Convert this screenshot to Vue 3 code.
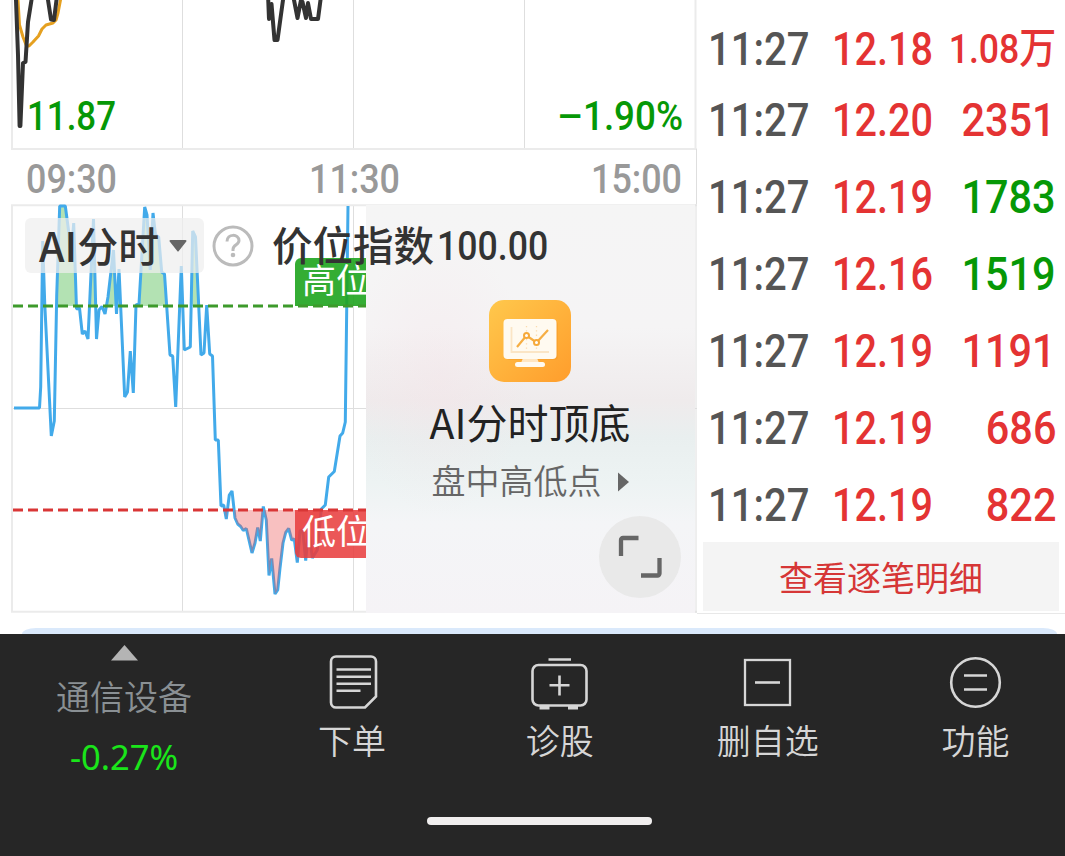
<template>
    <div class="page">
        <div class="content">
            <div class="charts">
                <svg class="priceChart" width="697" height="204" viewBox="0 0 697 204">
                    <g class="grid">
                        <path d="M182.5 0V149 M353.5 0V149 M524.5 0V149" />
                        <path class="frame" d="M12 0V149 M11 149H697 M695.5 0V149" />
                        <path d="M696.5 149V204" />
                    </g>
                    <path class="average" d="M18 0L19.5 25L23 37L26.5 46L29 46L33 42L38.5 36L42 29L46 25L53 23L56 20L58 13L60.5 0" />
                    <path class="price" d="M16 0L18 55L19.6 126L20.4 126L23 63L25.5 62L28 22L31.5 0" />
                    <path class="price" d="M48 0L51 19.5L54 20L56.5 0" />
                    <path class="price" d="M268 -6L269 19L271.5 4L274.5 40L277.5 40L283 0" />
                    <path class="price" d="M294 0L297.5 18L301 0L302.5 2L306 18L308 3L311 19L318 19L320.5 0" />
                    <text class="low" x="27" y="130" textLength="89" lengthAdjust="spacingAndGlyphs">11.87</text>
                    <text class="low" x="557" y="129.5" textLength="22">–</text>
                    <text class="low" x="583" y="130" textLength="100" lengthAdjust="spacingAndGlyphs">1.90%</text>
                    <text
                        v-for="tick in ticks"
                        :key="tick.label"
                        class="tick"
                        :x="tick.x"
                        y="193"
                        textLength="91"
                        lengthAdjust="spacingAndGlyphs"
                    >{{ tick.label }}</text>
                </svg>

                <div class="indexChart">
                    <svg class="plot" width="697" height="410" viewBox="0 204 697 410">
                        <defs>
                            <clipPath id="above"><rect x="0" y="205" width="366" height="101" /></clipPath>
                            <clipPath id="below"><rect x="0" y="510" width="366" height="104" /></clipPath>
                            <clipPath id="visible"><rect x="0" y="204" width="366" height="410" /></clipPath>
                        </defs>
                        <g class="grid">
                            <path d="M182.5 205V612 M353.5 205V612 M12 408.5H697" />
                            <path class="frame" d="M12 205V612 M11 205.2H697 M11 611.8H697" />
                            <path d="M696 204V613" />
                        </g>
                        <path class="highFill" :d="areaPath(HIGH_Y)" clip-path="url(#above)" />
                        <path class="index" :d="linePath" />
                        <path class="lowFill" :d="areaPath(LOW_Y)" clip-path="url(#below)" />
                        <g clip-path="url(#visible)">
                            <path class="highTag" d="M295 306V264a6 6 0 0 1 6-6h72v48z" />
                            <path class="lowTag" d="M295 510v42a6 6 0 0 0 6 6h72v-48z" />
                            <path class="highLine" d="M13 306H366" />
                            <path class="lowLine" d="M13 510H366" />
                            <text class="tag" x="302" y="292.5">高位</text>
                            <text class="tag" x="302" y="544">低位</text>
                        </g>
                    </svg>

                    <div class="promo">
                        <svg class="promoIcon" width="82" height="82" viewBox="0 0 82 82">
                            <defs>
                                <linearGradient id="orange" x1="0" y1="0" x2="1" y2="1">
                                    <stop offset="0" stop-color="#ffc84c" />
                                    <stop offset="1" stop-color="#ff9d2c" />
                                </linearGradient>
                            </defs>
                            <rect width="82" height="82" rx="15" fill="url(#orange)" />
                            <rect x="17" y="21" width="52" height="39" rx="4" fill="#f39a25" opacity=".45" />
                            <path d="M34 58h14l2 5H32z" fill="#ffe6c2" />
                            <rect x="14.500" y="19" width="53" height="40" rx="4" fill="#fffaf0" />
                            <rect x="26" y="62" width="30" height="5" rx="2.500" fill="#fffaf0" />
                            <path d="M22.500 27V52H60" fill="none" stroke="#fbe5c5" stroke-width="1.800" />
                            <path d="M37.500 26V50M47.500 26V50" fill="none" stroke="#fbdcae" stroke-width="1.300" stroke-dasharray="1.300 3" />
                            <path d="M28 47L37.500 35.500L47.500 42.500L59 30" fill="none" stroke="#f6ae43" stroke-width="2.200" />
                            <circle cx="37.500" cy="35.500" r="2.500" fill="#fff" stroke="#f6a93a" stroke-width="2" />
                            <circle cx="47.500" cy="42.500" r="2.500" fill="#fff" stroke="#f6a93a" stroke-width="2" />
                        </svg>
                        <div class="promoTitle">AI分时顶底</div>
                        <div class="promoLink">
                            <span>盘中高低点</span>
                            <svg width="12" height="20" viewBox="0 0 12 20"><path d="M1 .5L12 10L1 19.500z" fill="#666" /></svg>
                        </div>
                    </div>

                    <button class="expand">
                        <svg width="82" height="82" viewBox="0 0 82 82">
                            <path d="M22 40V24a2 2 0 0 1 2-2H39.500M60.500 42V57.500a2 2 0 0 1-2 2H42" fill="none" stroke="#666" stroke-width="4.300" />
                        </svg>
                    </button>

                    <div class="toolbar">
                        <div class="picker">
                            <span>AI分时</span>
                            <svg width="18" height="12" viewBox="0 0 18 12"><path d="M1.500 0h15a1 1 0 0 1 .8 1.600L9.800 11a1 1 0 0 1-1.600 0L.7 1.600A1 1 0 0 1 1.500 0z" fill="#666" /></svg>
                        </div>
                        <svg class="help" width="42" height="42" viewBox="0 0 42 42" fill="none" stroke="#bbb">
                            <circle cx="21" cy="21" r="19" stroke-width="3" />
                            <path d="M15 16.500C15 8.500 27 8.500 27 15.500C27 20 21 19.500 21 24.500V26" stroke-width="3" />
                            <circle cx="21" cy="30" r="2.300" fill="#bbb" stroke="none" />
                        </svg>
                        <span class="indexName">价位指数</span>
                        <span class="indexValue">100.00</span>
                    </div>
                </div>
            </div>

            <div class="trades">
                <div v-for="(trade, i) in trades" :key="i" class="trade">
                    <span class="digits time">11:27</span>
                    <span class="digits tradePrice">{{ trade.price }}</span>
                    <span class="digits volume" :class="[trade.side, { compact: trade.unit }]">{{ trade.volume }}<span v-if="trade.unit" class="unit">{{ trade.unit }}</span></span>
                </div>
                <button class="details">查看逐笔明细</button>
            </div>
        </div>

        <div class="nextCard"></div>

        <nav class="bottomBar">
            <div class="tabs">
                <div class="sector">
                    <svg width="28" height="16" viewBox="0 0 28 16"><path d="M14.500 0L28 15.500H1z" fill="#b4b4b4" /></svg>
                    <span class="sectorName">通信设备</span>
                    <span class="sectorChange">-0.27%</span>
                </div>
                <div class="tab">
                    <svg width="60" height="60" viewBox="0 0 60 60">
                        <path d="M14 4.500H49a5 5 0 0 1 5 5V44.500L43 55.500H14a5 5 0 0 1-5-5V9.500a5 5 0 0 1 5-5z" />
                        <path d="M14.500 17.500H49M14.500 24.700H49M14.500 31.700H49M14.500 38.800H38.500" />
                    </svg>
                    <span>下单</span>
                </div>
                <div class="tab">
                    <svg width="60" height="60" viewBox="0 0 60 60">
                        <rect x="2.500" y="13" width="54" height="40.500" rx="6" />
                        <path d="M18.500 7.500H41M19.500 33.200H39.500M29.500 23.500V43.500" />
                        <path d="M9.500 55.500H19.500M38 55.500H48" stroke-width="4" />
                    </svg>
                    <span>诊股</span>
                </div>
                <div class="tab">
                    <svg width="60" height="60" viewBox="0 0 60 60">
                        <rect x="7" y="8" width="45" height="45" stroke-width="2.300" />
                        <path d="M17 30.500H42" />
                    </svg>
                    <span>删自选</span>
                </div>
                <div class="tab">
                    <svg width="60" height="60" viewBox="0 0 60 60">
                        <circle cx="29.500" cy="30.500" r="24.300" />
                        <path d="M18 23.500H41M18 37.500H41" />
                    </svg>
                    <span>功能</span>
                </div>
            </div>
            <div class="homeIndicator"></div>
        </nav>
    </div>
</template>

<script setup>
const HIGH_Y = 306;
const LOW_Y = 510;

const ticks = [
    { label: "09:30", x: 26 },
    { label: "11:30", x: 309 },
    { label: "15:00", x: 591 },
];

const points = [
    [14, 408], [39.5, 408], [40.7, 387], [42.7, 241], [44.7, 303], [51.3, 436], [54.3, 421],
    [56.7, 296], [59.7, 206], [65.3, 206], [68.5, 230], [70.7, 262], [73.7, 223], [76.5, 309],
    [79.5, 308], [82.3, 334], [85, 331], [88, 339], [93.5, 219], [96.5, 339], [99, 310],
    [102, 306.5], [105, 314], [108, 297], [113.5, 250], [116.5, 314], [119, 269], [124.7, 397],
    [127.5, 392], [130.3, 351], [133.3, 393], [136, 305], [139, 304], [144.7, 207], [147, 215],
    [150.3, 270], [153, 213], [155.5, 235], [158.7, 237], [161.7, 272], [164.5, 274], [170, 355],
    [172.7, 356], [175.7, 407], [181.3, 266], [184.3, 350], [190.3, 347], [192.7, 231],
    [195.5, 237], [201, 355], [204, 353], [206.7, 305], [209.7, 354], [212.5, 356], [215.3, 440],
    [218.3, 440], [221, 506], [223.7, 505], [226.3, 519], [229.3, 495], [232, 491], [235, 518],
    [237.7, 524], [240.7, 526.5], [243.3, 530.5], [246.3, 528.5], [252, 553], [255, 543],
    [257.7, 527.5], [260.3, 541], [263.3, 506.5], [266.3, 520], [269, 575.5], [271.7, 558.5],
    [275, 594], [277.7, 590], [280, 568], [283, 543], [285.7, 532.5], [288.7, 528.5],
    [291.7, 540], [294.3, 539], [297.3, 562.5], [300, 531], [302.7, 530], [305.7, 560.5],
    [308.7, 528], [312.3, 558], [317.3, 550], [321.3, 509], [325.3, 505], [328.7, 477],
    [334.3, 471.5], [340, 436], [342.7, 433], [345.3, 422], [348, 206],
];

const linePath = "M" + points.map(p => p.join(" ")).join("L");

function areaPath(baseline) {
    const first = points[0][0];
    const last = points[points.length-1][0];
    return `${linePath}L${last} ${baseline}L${first} ${baseline}Z`;
}

const trades = [
    { price: "12.18", volume: "1.08", unit: "万", side: "rise" },
    { price: "12.20", volume: "2351", side: "rise" },
    { price: "12.19", volume: "1783", side: "fall" },
    { price: "12.16", volume: "1519", side: "fall" },
    { price: "12.19", volume: "1191", side: "rise" },
    { price: "12.19", volume: "686", side: "rise" },
    { price: "12.19", volume: "822", side: "rise" },
];
</script>

<style>
 body {
     margin: 0;
     background: #fff;
 }
</style>

<style scoped>
 .page {
     width: 1065px;
     height: 856px;
     overflow: hidden;
     display: flex;
     flex-direction: column;
     background: #fff;
     font-family: "Noto Sans CJK SC", sans-serif;
 }

 .content {
     display: flex;
     height: 614px;
 }

 svg {
     display: block;
     flex: none;
 }

 button {
     border: 0;
     padding: 0;
     font-family: inherit;
 }

 .charts {
     width: 697px;
     flex: none;
 }

 .grid path {
     fill: none;
     stroke: #dedede;
     stroke-width: 1;
 }

 .grid .frame {
     stroke: #ebebeb;
     stroke-width: 2;
 }

 .price, .average {
     fill: none;
     stroke: #333;
     stroke-width: 4;
     stroke-linejoin: round;
     stroke-linecap: round;
 }

 .average {
     stroke: #e5a020;
     stroke-width: 3;
 }

 .low, .tick {
     font: 500 40.5px Roboto, sans-serif;
     fill: #069806;
 }

 .tick {
     fill: #999;
 }

 .indexChart {
     position: relative;
     height: 410px;
 }

 .index {
     fill: none;
     stroke: #42aaea;
     stroke-width: 3;
     stroke-linejoin: bevel;
 }

 .highFill {
     fill: #b3e2b3;
 }

 .lowFill {
     fill: rgba(235, 80, 80, .36);
 }

 .highTag {
     fill: rgba(32, 165, 32, .91);
 }

 .lowTag {
     fill: rgba(232, 62, 62, .87);
 }

 .highLine, .lowLine {
     fill: none;
     stroke: #3d9a2b;
     stroke-width: 3;
     stroke-dasharray: 10 5;
 }

 .lowLine {
     stroke: #d93636;
 }

 .tag {
     font-size: 34px;
     fill: #fff;
 }

 .promo {
     position: absolute;
     left: 366px;
     top: 1px;
     width: 329px;
     height: 408px;
     box-sizing: border-box;
     padding: 95px 1px 0 0;
     display: flex;
     flex-direction: column;
     align-items: center;
     background:
         radial-gradient(ellipse 90px 140px at 22% 42%, rgba(245, 225, 230, .35), transparent),
         linear-gradient(#f5f5f5 0%, #f5f4f5 30%, #efebec 48%, #e9efef 57%, #edf3f3 68%, #f4f5f7 78%, #f5f3f6 100%);
 }

 .promoTitle {
     margin-top: 14px;
     font-size: 41px;
     line-height: 50px;
     color: #222;
     white-space: nowrap;
 }

 .promoLink {
     margin-top: 10px;
     display: flex;
     align-items: center;
     gap: 15px;
     font-size: 34px;
     line-height: 48px;
     color: #666;
     font-weight: 350;
 }

 .promoLink svg {
     margin-top: 3px;
 }

 .expand {
     position: absolute;
     left: 599px;
     top: 312px;
     width: 82px;
     height: 82px;
     border-radius: 50%;
     background: #e9e9e9;
 }

 .toolbar {
     position: absolute;
     left: 25px;
     top: 14px;
     height: 55px;
     display: flex;
     align-items: center;
     color: #333;
 }

 .picker {
     width: 179px;
     height: 55px;
     box-sizing: border-box;
     padding-left: 14px;
     display: flex;
     align-items: center;
     gap: 10px;
     border-radius: 6px;
     background: rgba(238, 238, 238, .72);
     font-size: 41px;
     font-weight: 500;
 }

 .picker span {
     height: 55px;
     line-height: 52px;
 }

 .help {
     margin-left: 8px;
 }

 .indexName {
     margin-left: 18px;
     height: 55px;
     font-size: 40.5px;
     font-weight: 500;
     line-height: 51px;
 }

 .indexValue {
     margin-left: 3px;
     font: 500 40.5px Roboto, sans-serif;
     transform: scaleX(.88);
     transform-origin: left;
 }

 .trades {
     width: 368px;
     box-sizing: border-box;
     padding-top: 17px;
     border-bottom: 1px solid #e8e8e8;
 }

 .trade {
     height: 77px;
     display: flex;
     align-items: center;
     padding: 0 9px 0 11px;
 }

 .trade:first-child {
     height: 65px;
 }

 .digits {
     flex: none;
     font: 500 46px/77px Roboto, sans-serif;
     transform: scaleX(.87);
     transform-origin: left;
     white-space: nowrap;
 }

 .time {
     width: 124px;
     color: #555;
 }

 .tradePrice {
     width: 90px;
     color: #e43333;
     transform: scaleX(.86);
 }

 .volume {
     margin-left: auto;
     transform: scaleX(.9);
     transform-origin: right;
 }

 .compact {
     font-size: 40.5px;
     transform: scaleX(.88);
 }

 .unit {
     font-family: "Noto Sans CJK SC", sans-serif;
     font-size: 42px;
     line-height: 1;
 }

 .rise {
     color: #e43333;
 }

 .fall {
     color: #069806;
 }

 .details {
     display: block;
     width: 356px;
     height: 69px;
     margin: -2px 0 0 6px;
     background: #f4f4f4;
     color: #d63636;
     font-size: 34px;
     line-height: 69px;
 }

 .nextCard {
     height: 6px;
     margin: 14px 8px 0 22px;
     flex: none;
     border-radius: 14px 14px 0 0 / 6px 6px 0 0;
     background: #dae9fb;
 }

 .bottomBar {
     flex: 1;
     overflow: hidden;
     background: #262626;
 }

 .tabs {
     height: 187px;
     display: grid;
     grid-template-columns: 248px repeat(4, 207.900px);
 }

 .sector, .tab {
     display: flex;
     flex-direction: column;
     align-items: center;
 }

 .sector {
     padding-top: 11px;
 }

 .sectorName {
     margin-top: 11px;
     font-size: 34px;
     font-weight: 350;
     line-height: 48px;
     color: #8a9094;
 }

 .sectorChange {
     margin-top: 13px;
     font: 400 34.500px/48px "Noto Sans", sans-serif;
     color: #1ae51a;
 }

 .tab {
     padding-top: 18px;
     color: #d6d6d6;
     font-size: 34px;
     font-weight: 350;
 }

 .tab svg {
     fill: none;
     stroke: #d6d6d6;
     stroke-width: 2.600px;
 }

 .tab span {
     margin-top: 4px;
     line-height: 48px;
 }

 .homeIndicator {
     width: 225px;
     height: 8px;
     margin: -4px 0 0 427px;
     border-radius: 4px;
     background: #f0eeee;
 }
</style>
